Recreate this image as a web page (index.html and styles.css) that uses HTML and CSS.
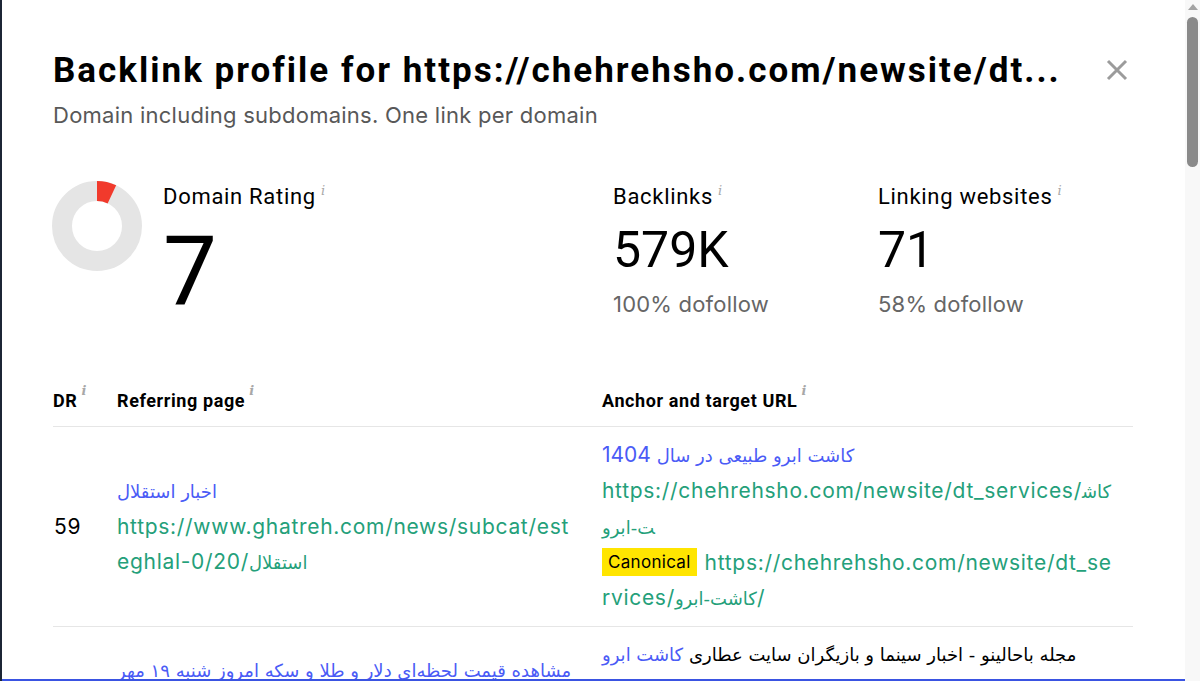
FILE: index.html
```html
<!DOCTYPE html>
<html lang="en">
<head>
<meta charset="utf-8">
<title>Backlink profile</title>
<link rel="stylesheet" href="styles.css">
</head>
<body>
<div class="modal">
  <div class="head">
    <h1 class="title">Backlink profile for https://chehrehsho.com/newsite/dt...</h1>
    <svg class="close" width="22" height="22" viewBox="0 0 22 22"><path d="M2 2L20 20M20 2L2 20" stroke="#9b9b9b" stroke-width="3" fill="none"/></svg>
  </div>
  <p class="subtitle">Domain including subdomains. One link per domain</p>

  <div class="stats">
    <div class="stat stat-dr">
      <svg class="donut" width="90" height="90" viewBox="0 0 90 90">
        <circle cx="45" cy="45" r="35" fill="none" stroke="#e5e5e5" stroke-width="20"/>
        <circle cx="45" cy="45" r="35" fill="none" stroke="#f13a2c" stroke-width="20" stroke-dasharray="15.4 300" transform="rotate(-90 45 45)"/>
      </svg>
      <div class="stat-body">
        <div class="label">Domain Rating<span class="info">i</span></div>
        <div class="big">7</div>
      </div>
    </div>
    <div class="stat stat-bl">
      <div class="label">Backlinks<span class="info">i</span></div>
      <div class="num">579K</div>
      <div class="sub">100% dofollow</div>
    </div>
    <div class="stat stat-lw">
      <div class="label">Linking websites<span class="info">i</span></div>
      <div class="num">71</div>
      <div class="sub">58% dofollow</div>
    </div>
  </div>

  <div class="table">
    <div class="thead">
      <div class="th">DR<span class="info">i</span></div>
      <div class="th">Referring page<span class="info">i</span></div>
      <div class="th">Anchor and target URL<span class="info">i</span></div>
    </div>
    <div class="tr">
      <div class="td dr">59</div>
      <div class="td ref">
        <div class="ptitle"><span class="fa">اخبار استقلال</span></div>
        <div class="url">https://www.ghatreh.com/news/subcat/esteghlal-0/20/<span class="fa">استقلال</span></div>
      </div>
      <div class="td anchor">
        <div class="ptitle"><span class="fa">کاشت ابرو طبیعی در سال </span>1404</div>
        <div class="url">https://chehrehsho.com/newsite/dt_services/<span class="fa">کاشت-ابرو</span></div>
        <div class="url"><span class="badge">Canonical</span>https://chehrehsho.com/newsite/dt_services/<span class="fa">کاشت-ابرو</span>/</div>
      </div>
    </div>
    <div class="tr">
      <div class="td dr">41</div>
      <div class="td ref ref-shift">
        <div class="ptitle"><span class="fa">مشاهده قیمت لحظه‌ای دلار و طلا و سکه امروز شنبه ۱۹ مهر</span></div>
        <div class="url">https://bahalino.ir/news/price-dollar-gold-coin-today-19-mehr</div>
      </div>
      <div class="td anchor">
        <div class="ctx"><span class="fa">مجله باحالینو - اخبار سینما و بازیگران سایت عطاری <span class="ptitle-in">کاشت ابرو</span></span></div>
        <div class="url">https://chehrehsho.com/newsite/dt_services/<span class="fa">کاشت-ابرو</span></div>
        <div class="url"><span class="badge">Canonical</span>https://chehrehsho.com/newsite/</div>
      </div>
    </div>
  </div>
</div>
<div class="scrollbar">
  <div class="sb-arrow"></div>
  <div class="sb-thumb"></div>
</div>
</body>
</html>
```

FILE: styles.css
```css
html, body {
  margin: 0;
  height: 681px;
  overflow: hidden;
}
body {
  display: flex;
  background: #1c2535;
  font-family: Inter, "DejaVu Sans", sans-serif;
  color: #111;
}
.modal {
  margin-left: 2px;
  flex: 1;
  min-width: 0;
  background: #fff;
  border-bottom: 2px solid #3a54e2;
  box-sizing: border-box;
  height: 681px;
  overflow: hidden;
  padding: 51px 52px 0 51px;
}
.head {
  display: flex;
  justify-content: space-between;
  align-items: flex-start;
}
.title {
  margin: 0;
  font-family: Roboto, sans-serif;
  font-weight: 700;
  font-size: 35px;
  line-height: 40px;
  letter-spacing: 2px;
  color: #000;
  white-space: nowrap;
}
.close {
  margin-top: 8px;
  margin-right: 5px;
  flex: none;
}
.subtitle {
  margin: 11px 0 0;
  font-size: 22px;
  line-height: 26px;
  letter-spacing: 0.25px;
  color: #585858;
}
.stats {
  display: flex;
  margin-top: 53px;
}
.stat-dr {
  width: 561px;
  display: flex;
  align-items: flex-start;
  margin-left: -1px;
}
.stat-bl {
  width: 265px;
}
.donut {
  flex: none;
  margin-right: 21px;
}
.stat-body, .stat-bl, .stat-lw {
  padding-top: 3px;
}
.label {
  font-family: Roboto, sans-serif;
  font-size: 22px;
  line-height: 26px;
  letter-spacing: 0.7px;
  color: #000;
}
.info {
  font-family: "DejaVu Serif", serif;
  font-style: italic;
  font-size: 13px;
  letter-spacing: 0;
  color: #a8a8a8;
  vertical-align: top;
  line-height: 14px;
  margin-left: 5px;
}
.big {
  font-family: Roboto, sans-serif;
  font-size: 96px;
  line-height: 96px;
  margin-top: 14px;
  color: #000;
}
.num {
  font-family: Roboto, sans-serif;
  font-size: 50px;
  line-height: 50px;
  margin-top: 15px;
  color: #000;
}
.sub {
  font-size: 22px;
  line-height: 26px;
  letter-spacing: 0.2px;
  margin-top: 16px;
  color: #666;
}
.table {
  margin-top: 56px;
}
.thead, .tr {
  display: grid;
  grid-template-columns: 64px 485px 1fr;
  align-items: center;
  border-bottom: 1px solid #e6e6e6;
}
.thead {
  height: 50px;
}
.th {
  font-family: Roboto, sans-serif;
  font-weight: 700;
  font-size: 18px;
  line-height: 50px;
  letter-spacing: 0.6px;
  color: #000;
}
.th .info {
  line-height: 30px;
  margin-left: 4px;
}
.tr {
  padding: 10px 0;
}
.td {
  font-size: 21px;
  line-height: 35px;
  letter-spacing: 0.7px;
}
.dr {
  padding-left: 1px;
  color: #000;
}
.ref {
  padding-right: 26px;
}
.ref-shift {
  padding-bottom: 10px;
}
.anchor {
  padding-right: 14px;
}
.fa {
  font-family: "DejaVu Sans", sans-serif;
  font-size: 18px;
  letter-spacing: 0;
}
.ptitle, .ptitle-in {
  color: #4a5bf6;
}
.ctx {
  color: #000;
}
.ctx .fa {
  vertical-align: 4px;
}
.url {
  color: #24a07a;
  word-break: break-all;
}
.badge {
  display: inline-block;
  background: #ffe500;
  color: #000;
  font-size: 17px;
  letter-spacing: 0.3px;
  line-height: 28px;
  padding: 0 6px;
  margin-right: 8px;
  vertical-align: 2px;
}
.scrollbar {
  width: 15px;
  flex: none;
  background: #f8f8f8;
  display: flex;
  flex-direction: column;
  align-items: center;
}
.sb-arrow {
  width: 0;
  height: 0;
  margin-top: 4px;
  border-left: 5px solid transparent;
  border-right: 5px solid transparent;
  border-bottom: 6px solid #a3a3a3;
}
.sb-thumb {
  margin-top: 7px;
  width: 11px;
  height: 150px;
  border-radius: 6px;
  background: #8a8a8a;
}
```
